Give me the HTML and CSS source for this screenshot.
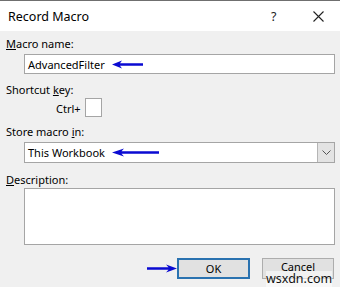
FILE: index.html
```html
<!DOCTYPE html>
<html>
<head>
<meta charset="utf-8">
<link rel="stylesheet" href="styles.css">
</head>
<body>
<div class="dialog">
  <div class="titlebar">
    <span class="title">Record Macro</span>
    <span class="help">?</span>
    <svg class="close" width="11" height="11" viewBox="0 0 11 11"><path d="M0.5 0.5 L10.5 10.5 M10.5 0.5 L0.5 10.5" stroke="#222" stroke-width="1.1" fill="none"/></svg>
  </div>
  <div class="content">
    <div class="label first"><u>M</u>acro name:</div>
    <div class="textbox">
      <span class="val">AdvancedFilter</span>
      <svg class="arrow-left" width="31" height="9" viewBox="0 0 31 9"><path d="M0 4.5 L10 0.5 L8 3.2 L31 3.2 L31 5.8 L8 5.8 L10 8.5 Z" fill="#0a0ad2"/></svg>
    </div>
    <div class="label">Shortcut <u>k</u>ey:</div>
    <div class="ctrlrow">
      <span class="ctrl">Ctrl+</span>
      <span class="keybox"></span>
    </div>
    <div class="label">Store macro <u>i</u>n:</div>
    <div class="combo">
      <span class="val">This Workbook</span>
      <svg class="arrow-left" width="47" height="9" viewBox="0 0 47 9"><path d="M0 4.5 L12 0.5 L9.5 3.2 L47 3.2 L47 5.8 L9.5 5.8 L12 8.5 Z" fill="#0a0ad2"/></svg>
      <span class="dropbtn"><svg width="9" height="6" viewBox="0 0 9 6"><path d="M0.5 0.5 L4.5 4.5 L8.5 0.5" stroke="#555" stroke-width="1" fill="none"/></svg></span>
    </div>
    <div class="label"><u>D</u>escription:</div>
    <div class="desc"></div>
    <div class="buttons">
      <svg class="arrow-right" width="30" height="9" viewBox="0 0 30 9"><path d="M30 4.5 L19 0.5 L21.5 3.2 L0 3.2 L0 5.8 L21.5 5.8 L19 8.5 Z" fill="#0a0ad2"/></svg>
      <span class="btn ok">OK</span>
      <span class="btn cancel"><span class="cancel-text">Cancel</span></span>
    </div>
  </div>
  <span class="watermark">wsxdn.com</span>
</div>
</body>
</html>
```
FILE: styles.css
```css
html, body {
  margin: 0;
  padding: 0;
}
body {
  width: 340px;
  height: 287px;
  overflow: hidden;
  font-family: "Noto Sans", "Liberation Sans", sans-serif;
  font-size: 11px;
  color: #000;
}
.dialog {
  position: relative;
  width: 340px;
  height: 287px;
  background: #f0f0f0;
}
.titlebar {
  height: 30px;
  background: #fff;
  border-top: 1px solid #6f6f6f;
  display: flex;
  align-items: center;
  padding-left: 8px;
}
.title {
  font-size: 12.5px;
  flex: 1;
}
.help {
  font-size: 12.5px;
  width: 6px;
  margin-right: 36px;
  color: #222;
}
.close {
  margin-right: 16px;
}
.content {
  padding: 0 6px 0 6px;
}
.label {
  height: 16px;
  line-height: 16px;
  margin-top: 8px;
}
.label.first {
  margin-top: 5px;
}
.textbox, .combo {
  box-sizing: border-box;
  margin: 2px 0 0 18px;
  width: 311px;
  height: 20px;
  border: 1px solid #a5a5a5;
  background: #fff;
  display: flex;
  align-items: center;
  padding-left: 3px;
}
.combo {
  height: 21px;
  margin-top: 2px;
  position: relative;
}
.val {
  margin-right: 7px;
}
.arrow-left {
  display: block;
}
.ctrlrow {
  display: flex;
  align-items: center;
  margin-left: 50px;
  height: 19px;
  margin-top: 0;
}
.ctrl {
  margin-right: 4px;
  padding-top: 1px;
}
.keybox {
  box-sizing: border-box;
  width: 17px;
  height: 19px;
  border: 1px solid #a5a5a5;
  background: #fff;
}
.combo + .label {
  margin-top: 9px;
}
.ctrlrow + .label {
  margin-top: 7px;
}
.dropbtn {
  margin-left: auto;
  box-sizing: border-box;
  width: 17px;
  height: 19px;
  background: #e3e3e3;
  border-left: 1px solid #b5b5b5;
  display: flex;
  align-items: center;
  justify-content: center;
}
.desc {
  box-sizing: border-box;
  margin-left: 18px;
  width: 311px;
  height: 57px;
  border: 1px solid #a5a5a5;
  background: #fff;
}
.buttons {
  display: flex;
  justify-content: flex-end;
  align-items: center;
  margin-top: 13px;
}
.arrow-right {
  display: block;
}
.btn {
  box-sizing: border-box;
  height: 21px;
  display: flex;
  align-items: center;
  justify-content: center;
  background: #e1e1e1;
  line-height: 12px;
}
.cancel-text {
  margin-top: -3px;
  line-height: 12px;
}
.ok {
  width: 73px;
  border: 2px solid #2a72b0;
}
.cancel {
  width: 72px;
  border: 1px solid #adadad;
  margin-left: 12px;
}
.watermark {
  position: absolute;
  left: 266px;
  top: 271px;
  font-size: 12.5px;
  line-height: 16px;
  color: #111;
  background: rgba(255, 255, 255, 0.55);
}
```
